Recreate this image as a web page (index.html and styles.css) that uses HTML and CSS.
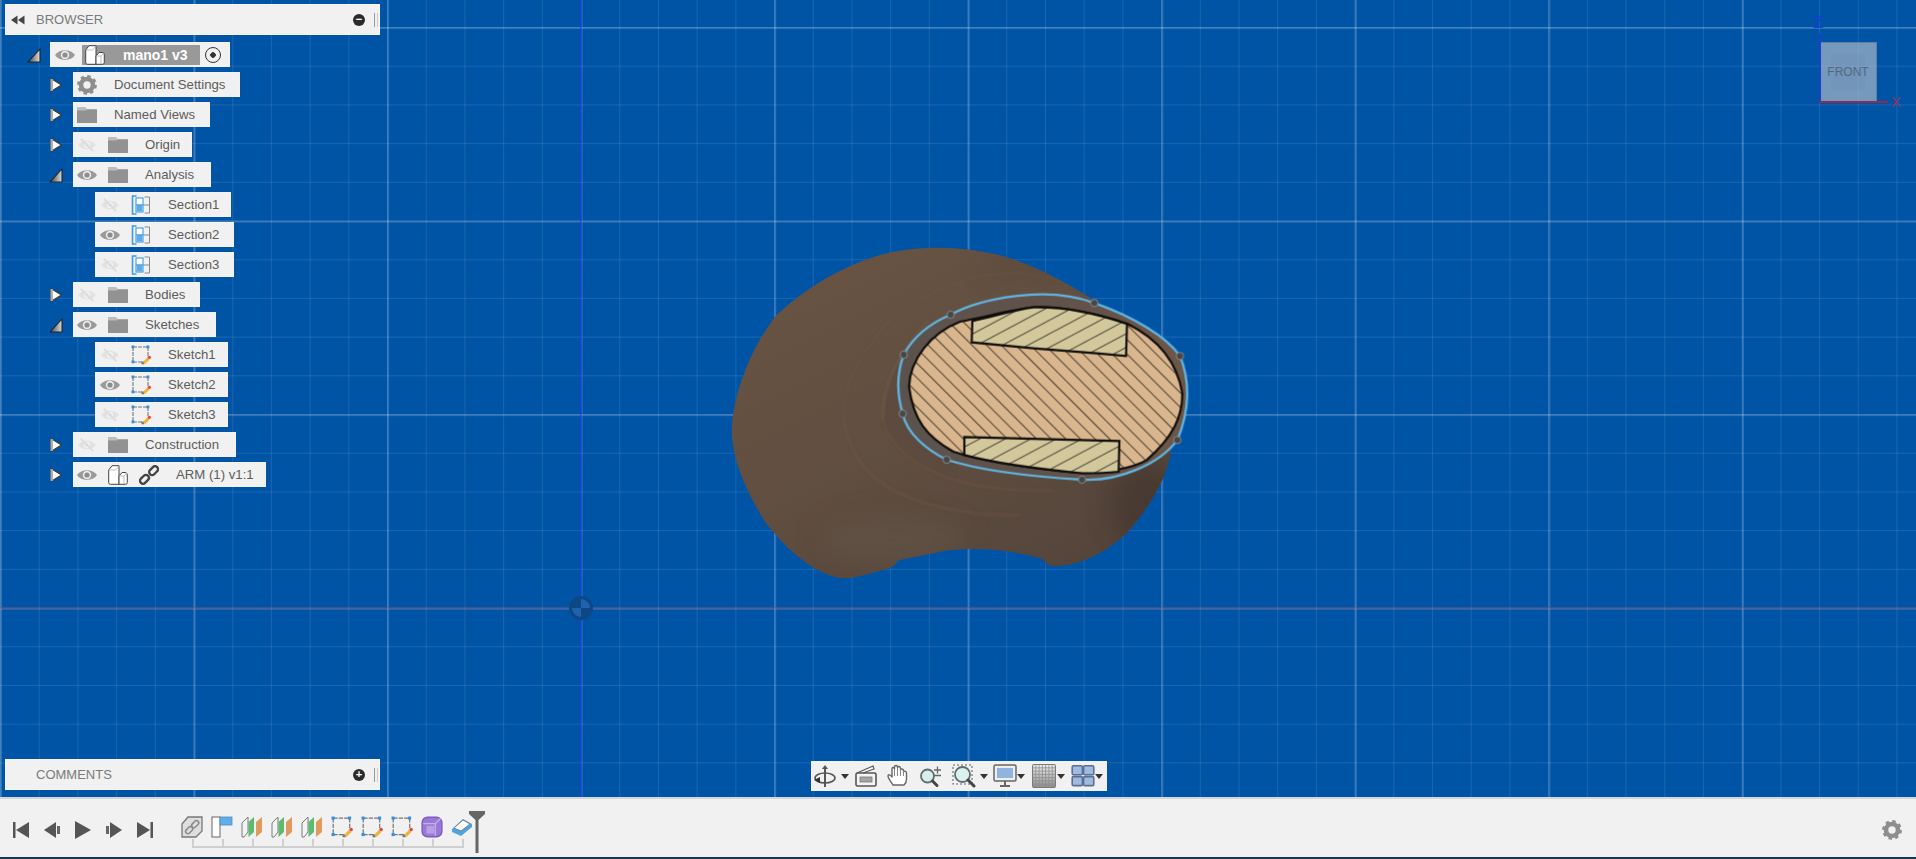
FILE: index.html
```html
<!DOCTYPE html>
<html lang="en">
<head>
<meta charset="utf-8">
<title>mano1 v3</title>
<link rel="stylesheet" href="styles.css">
</head>
<body>
<svg class="defs" aria-hidden="true">
  <defs>
    <linearGradient id="tri" x1="0" y1="0" x2="1" y2="0"><stop offset="0" stop-color="#444"/><stop offset="1" stop-color="#ddd"/></linearGradient>
    <linearGradient id="gridfade" x1="0" y1="0" x2="0" y2="1"><stop offset="0" stop-color="#f0f0f0"/><stop offset="1" stop-color="#8e8e8e"/></linearGradient>
    <symbol id="arrow-r" viewBox="0 0 14 16"><path d="M2 1.5 L12.5 8 L2 14.5Z" fill="#fff" stroke="#3b3b3b" stroke-width="1.3" stroke-linejoin="round"/><rect x="1.5" y="2" width="2.4" height="12" fill="#aaa"/></symbol>
    <symbol id="arrow-d" viewBox="0 0 14 16"><path d="M1 15 L13 2 V15Z" fill="url(#tri)" stroke="#222" stroke-width="1.1" stroke-linejoin="round"/></symbol>
    <symbol id="rewind" viewBox="0 0 14 10"><path d="M0 5 L6.5 0.5 V9.5Z M7 5 L13.5 0.5 V9.5Z" fill="#444"/></symbol>
    <symbol id="eye" viewBox="0 0 20 14"><path d="M0 7 C4 0.5 16 0.5 20 7 C16 13.5 4 13.5 0 7Z" fill="#9a9a9a"/><circle cx="10" cy="7" r="4.2" fill="#ececec"/><circle cx="10" cy="7" r="2.6" fill="#8d8d8d"/></symbol>
    <symbol id="eye-off" viewBox="0 0 20 16"><path d="M0 8 C4 1.5 16 1.5 20 8 C16 14.5 4 14.5 0 8Z" fill="#e2e2e2"/><circle cx="10" cy="8" r="3.6" fill="#f2f2f2"/><circle cx="10" cy="8" r="2" fill="#dedede"/><path d="M3 1 L17 15" stroke="#dcdcdc" stroke-width="2"/></symbol>
    <symbol id="folder" viewBox="0 0 20 17"><path d="M0 1 H8 L10 3 H20 V17 H0Z" fill="#bdbdbd"/><path d="M0 4.5 H8.5 L10 3.5 H20 V17 H0Z" fill="#929292"/></symbol>
    <symbol id="gear" viewBox="0 0 20 20"><circle cx="10" cy="10" r="6" fill="none" stroke="#8e8e8e" stroke-width="4.6"/><circle cx="10" cy="10" r="8.4" fill="none" stroke="#8e8e8e" stroke-width="3" stroke-dasharray="3.3 3.3"/></symbol>
    <symbol id="component" viewBox="0 0 20 20"><path d="M0.7 5 L4 0.7 H11 V19.3 H2.5 Q0.7 19.3 0.7 17.5Z" fill="#fff" stroke="#444" stroke-width="1"/><path d="M0.7 5 H7.5 L11 1" fill="none" stroke="#b0b0b0" stroke-width=".8"/><path d="M11 11 L14 7.5 H17 Q19.3 7.5 19.3 10 V17.5 Q19.3 19.3 17.5 19.3 H11Z" fill="#fff" stroke="#444" stroke-width="1"/><path d="M11 11 H16 L19 8 M16 11 V19" fill="none" stroke="#b0b0b0" stroke-width=".8"/></symbol>
    <symbol id="section" viewBox="0 0 20 20"><path d="M5.5 1 H1.5 V19 H5.5" fill="none" stroke="#3d9be6" stroke-width="1.6"/><rect x="5" y="3" width="7" height="14" fill="#fff" stroke="#3d9be6" stroke-width="1.1"/><rect x="5.6" y="10" width="5.8" height="6.4" fill="#5aabea"/><path d="M5 9.8 H12" stroke="#3d9be6" stroke-width="1"/><path d="M12 10 H18.5 M13.5 2 H18.5 V18 H13.5" fill="none" stroke="#8a8a8a" stroke-width="1"/></symbol>
    <symbol id="sketch" viewBox="0 0 20 20"><path d="M2 2 H17 V11 M2 2 V17 H11" fill="none" stroke="#777" stroke-width="1.1" stroke-dasharray="4 1"/><rect x="0.5" y="0.5" width="2.8" height="2.8" fill="#2f8fe2"/><rect x="15.5" y="0.5" width="2.8" height="2.8" fill="#2f8fe2"/><rect x="0.5" y="15.5" width="2.8" height="2.8" fill="#2f8fe2"/><rect x="10.5" y="16.5" width="2.8" height="2.8" fill="#777"/><path d="M13 18 L17.5 13.5" stroke="#f0b434" stroke-width="3"/><circle cx="18.3" cy="12.3" r="1.6" fill="#ee4040"/></symbol>
    <symbol id="link" viewBox="0 0 22 22"><g fill="none" stroke="#444" stroke-width="2.6"><rect x="10.5" y="3" width="11" height="6.5" rx="3.2" transform="rotate(-45 16 6.2)"/><rect x="0.5" y="12.5" width="11" height="6.5" rx="3.2" transform="rotate(-45 6 15.7)"/></g></symbol>
    <symbol id="tl-link" viewBox="0 0 22 22"><path d="M1 8 L7 1 H21 V15 L15 21 H1Z" fill="#dedede" stroke="#777" stroke-width="1.3"/><g fill="none" stroke="#8a8a8a" stroke-width="1.5"><rect x="10" y="6" width="8" height="4.5" rx="2.2" transform="rotate(-45 14 8)"/><rect x="4" y="12" width="8" height="4.5" rx="2.2" transform="rotate(-45 8 14)"/></g></symbol>
    <symbol id="tl-flag" viewBox="0 0 22 22"><rect x="1" y="1" width="8" height="20" fill="#fff" stroke="#666" stroke-width="1"/><rect x="9" y="1" width="12" height="8" fill="#62aee8" stroke="#4a8fc8" stroke-width=".8"/></symbol>
    <symbol id="tl-plane" viewBox="0 0 22 22"><path d="M1 7 L7 1 V16 L3 21 H1Z" fill="#f3f3f3" stroke="#7a7a7a" stroke-width="1"/><path d="M7.5 6 L13 1 V16 L7.5 21Z" fill="#5bbb6e"/><path d="M15 6 L21 1 V16 L15 21Z" fill="#e09a5c"/></symbol>
    <symbol id="tl-solid" viewBox="0 0 20 20"><rect x="1" y="1" width="18" height="18" rx="5" fill="#9a78d8" stroke="#7a55c0" stroke-width="1.2"/><path d="M2 7 H13 L18 2 M13 7 V18" fill="none" stroke="#c6b2ea" stroke-width="1.2"/><rect x="5" y="9" width="7" height="7" fill="#b8a0e4"/></symbol>
    <symbol id="tl-erase" viewBox="0 0 22 22"><path d="M1 13 L12 3 L21 8 V11 L10 20 L1 16Z" fill="#4ea3e2"/><path d="M3 12 L12 4 L19 8 L10 15Z" fill="#fff" stroke="#777" stroke-width=".9"/></symbol>
    <symbol id="orbit" viewBox="0 0 24 24"><path d="M12 1 L15 5 H13 V23 H11 V5 H9Z" fill="#555"/><ellipse cx="12" cy="14" rx="10" ry="5" fill="none" stroke="#555" stroke-width="1.6"/><path d="M1 16 L7 13 V19Z" fill="#333"/></symbol>
    <symbol id="look" viewBox="0 0 24 24"><path d="M3 9 L19 2 L20 5 L6 10" fill="#fff" stroke="#555" stroke-width="1.2"/><rect x="2" y="9" width="20" height="13" rx="1.5" fill="#f5f5f5" stroke="#555" stroke-width="1.6"/><rect x="6" y="13" width="12" height="5" fill="#a4a4a4" stroke="#777" stroke-width=".8"/></symbol>
    <symbol id="hand" viewBox="0 0 24 24"><path d="M7 21 C5 18 2 14 2 12 C2 10 4 10.5 6 13 V5 C6 3 8.5 3 8.5 5 V3 C8.5 1 11.5 1 11.5 3 V4 C11.5 2 14.5 2 14.5 4.5 V6 C14.5 4.5 17.5 4.5 17.5 6.5 V8 C17.5 6.5 20.5 7 20.5 9 V15 C20.5 18 19 20 18 21Z" fill="#fff" stroke="#666" stroke-width="1.4" stroke-linejoin="round"/><path d="M8.5 5 V12 M11.5 4 V12 M14.5 5 V12 M17.5 7 V12" stroke="#888" stroke-width="1"/></symbol>
    <symbol id="zoomer" viewBox="0 0 24 24"><circle cx="8.5" cy="12" r="6.5" fill="#d6eeee" stroke="#5e6e6e" stroke-width="1.8"/><path d="M13.5 17 L18 21.5" stroke="#444" stroke-width="3" stroke-linecap="round"/><path d="M15 6 H22 M18.5 2.5 V9.5 M15 11.5 H22" stroke="#666" stroke-width="1.3"/></symbol>
    <symbol id="fit" viewBox="0 0 24 24"><rect x="1" y="1" width="19" height="19" fill="none" stroke="#666" stroke-width="1.1" stroke-dasharray="2 2"/><circle cx="10.5" cy="10.5" r="7.5" fill="#dcf0f0" stroke="#5e6e6e" stroke-width="1.8"/><path d="M16 16 L22 22" stroke="#444" stroke-width="3" stroke-linecap="round"/></symbol>
    <symbol id="display" viewBox="0 0 24 24"><rect x="1" y="1" width="22" height="16" rx="1.5" fill="#eee" stroke="#666" stroke-width="1.5"/><rect x="4" y="4" width="16" height="10" fill="#8fb4de"/><path d="M7 22 H17 M12 17 V22" stroke="#666" stroke-width="2"/></symbol>
    <symbol id="gridi" viewBox="0 0 22 22"><rect x=".5" y=".5" width="21" height="21" rx="1.5" fill="url(#gridfade)" stroke="#777"/><path d="M3.5 0 V22 M6.5 0 V22 M9.5 0 V22 M12.5 0 V22 M15.5 0 V22 M18.5 0 V22 M0 3.5 H22 M0 6.5 H22 M0 9.5 H22 M0 12.5 H22 M0 15.5 H22 M0 18.5 H22" stroke="#8a8a8a" stroke-width=".7"/></symbol>
    <symbol id="views" viewBox="0 0 20 20"><rect x="1" y="1.5" width="8.5" height="7.5" rx="1" fill="#9fbbe0" stroke="#5a6f92" stroke-width="1.3"/><rect x="10.5" y="1.5" width="8.5" height="7.5" rx="1" fill="#9fbbe0" stroke="#5a6f92" stroke-width="1.3"/><rect x="1" y="10.5" width="8.5" height="7.5" rx="1" fill="#9fbbe0" stroke="#5a6f92" stroke-width="1.3"/><rect x="10.5" y="10.5" width="8.5" height="7.5" rx="1" fill="#9fbbe0" stroke="#5a6f92" stroke-width="1.3"/></symbol>
  </defs>
</svg>

<div class="app">
  <main class="viewport">
    <svg class="model" viewBox="0 0 1560 1110" aria-label="Section view of the model">
      <defs>
        <linearGradient id="bodyfill" x1="0.1" y1="0" x2="0.8" y2="1">
          <stop offset="0" stop-color="#6b5544"/><stop offset=".55" stop-color="#604e40"/><stop offset="1" stop-color="#52433a"/>
        </linearGradient>
        <linearGradient id="bandfill" x1="0" y1="0" x2="1" y2="0">
          <stop offset="0" stop-color="#5c524d"/><stop offset=".6" stop-color="#62524a"/><stop offset="1" stop-color="#6d5747"/>
        </linearGradient>
        <filter id="soft" x="-30%" y="-30%" width="160%" height="160%"><feGaussianBlur stdDeviation="40"/></filter>
        <filter id="ridge" x="-10%" y="-10%" width="120%" height="120%"><feGaussianBlur stdDeviation="2.5"/></filter>
        <clipPath id="bodyclip"><path d="M700 83 C790 82 880 95 960 125 C1040 155 1120 200 1180 240 C1300 310 1420 500 1415 680 C1405 770 1350 860 1280 940 C1210 1005 1130 1040 1060 1038 C1040 1036 1035 1025 1030 1018 C950 990 800 975 700 1000 C660 1008 620 1016 592 1022 C588 1035 575 1045 545 1050 C500 1065 460 1075 425 1075 C340 1060 260 990 195 905 C135 810 95 710 95 630 C100 520 150 390 225 290 C320 200 440 130 560 100 C610 88 655 84 700 83Z"/></clipPath>
        <pattern id="hatch-main" width="31" height="31" patternUnits="userSpaceOnUse" patternTransform="rotate(-45)">
          <rect width="31" height="31" fill="#d9b68d"/><rect width="2.3" height="31" fill="#1d1a16"/>
        </pattern>
        <pattern id="hatch-ins" width="36" height="36" patternUnits="userSpaceOnUse" patternTransform="rotate(62)">
          <rect width="36" height="36" fill="#d3c89c"/><rect width="2.3" height="36" fill="#1d1a16"/>
        </pattern>
      </defs>
      <g clip-path="url(#bodyclip)">
        <rect width="1560" height="1110" fill="url(#bodyfill)"/>
        <g filter="url(#soft)" opacity=".7">
          <ellipse cx="1340" cy="850" rx="110" ry="130" fill="#43362f"/>
          <ellipse cx="580" cy="960" rx="220" ry="70" fill="#625246"/>
          <ellipse cx="1000" cy="130" rx="150" ry="40" fill="#5a483b"/>
        </g>
        <path fill="#5d4c3f" opacity=".7" filter="url(#ridge)" d="M548 600 C545 500 590 400 690 300 L800 600 L760 780 C640 740 570 680 548 600Z"/>
        <g filter="url(#ridge)" fill="none">
          <path d="M432 600 C425 500 470 420 560 310 C640 240 760 175 900 160 C1000 155 1100 180 1180 235" stroke="#75594a" stroke-width="5" opacity=".35"/>
          <path d="M432 600 C445 700 500 780 620 830 C720 870 850 890 960 885" stroke="#72594a" stroke-width="8" opacity=".4"/>
          <path d="M548 600 C545 500 590 400 690 300" stroke="#77614e" stroke-width="7" opacity=".6"/>
          <path d="M548 600 C570 680 640 740 760 780 C850 805 960 815 1060 812" stroke="#75594a" stroke-width="6" opacity=".45"/>
        </g>
      </g>
      <path fill="url(#bandfill)" d="M752 284 C840 235 1040 195 1183 249 C1300 290 1400 350 1440 408 C1470 480 1470 570 1432 660 C1380 730 1260 785 1146 779 C1000 770 850 755 740 719 C680 690 620 640 608 581 C590 520 590 460 611 404 C640 350 690 310 752 284Z"/>
      <path fill="url(#hatch-main)" stroke="#0f0d0b" stroke-width="6.5" d="M1000 262 C1060 258 1180 275 1283 312 C1370 355 1430 420 1447 520 C1447 590 1420 650 1340 720 C1300 745 1200 762 1130 758 C1000 745 850 725 760 695 C680 650 640 600 627 500 C630 420 690 340 780 305 C860 290 930 270 1000 262Z"/>
      <path fill="url(#hatch-ins)" stroke="#0f0d0b" stroke-width="6.5" d="M817 303 C880 290 940 270 1000 262 C1090 260 1190 280 1281 312 L1278 408 L1190 400 L1000 385 L815 367Z"/>
      <path fill="url(#hatch-ins)" stroke="#0f0d0b" stroke-width="6.5" d="M793 651 L1258 663 L1256 755 C1200 760 1150 760 1130 758 C1000 745 880 728 793 705Z"/>
      <path fill="none" stroke="#62b5e2" stroke-width="7" d="M752 284 C840 235 1040 195 1183 249 C1300 290 1400 350 1440 408 C1470 480 1470 570 1432 660 C1380 730 1260 785 1146 779 C1000 770 850 755 740 719 C680 690 620 640 608 581 C590 520 590 460 611 404 C640 350 690 310 752 284Z"/>
      <g class="node"><circle cx="1183" cy="249" r="11"/><circle cx="1440" cy="408" r="11"/><circle cx="1432" cy="660" r="11"/><circle cx="1146" cy="779" r="11"/><circle cx="740" cy="719" r="11"/><circle cx="608" cy="581" r="11"/><circle cx="611" cy="404" r="11"/><circle cx="752" cy="284" r="11"/></g>
    </svg>

    <svg class="origin" viewBox="0 0 26 26" aria-hidden="true">
      <circle cx="13" cy="13" r="12" fill="#0d4884"/>
      <path d="M13 13 V4 A9 9 0 0 1 22 13Z M13 13 V22 A9 9 0 0 1 4 13Z" fill="#1f63ad"/>
    </svg>

    <div class="cube">
      <span class="axis-z-label">Z</span>
      <div class="cube-face"><div class="cube-inner">FRONT</div></div>
      <span class="axis-x-label">X</span>
    </div>

    <aside class="browser">
      <header class="panel-bar">
        <svg class="back"><use href="#rewind"/></svg>
        <span class="panel-title">BROWSER</span>
        <span class="round-btn">−</span>
        <span class="grip"></span>
      </header>
      <ul class="tree">
        <li class="row root">
          <svg class="tw"><use href="#arrow-d"/></svg>
          <div class="item">
            <svg class="ic-eye"><use href="#eye"/></svg>
            <div class="active"><svg class="ic"><use href="#component"/></svg><span>mano1 v3</span></div>
            <span class="target"></span>
          </div>
        </li>
        <li class="row l1"><svg class="tw"><use href="#arrow-r"/></svg><div class="item"><svg class="ic"><use href="#gear"/></svg><span class="lbl">Document Settings</span></div></li>
        <li class="row l1"><svg class="tw"><use href="#arrow-r"/></svg><div class="item"><svg class="ic-f"><use href="#folder"/></svg><span class="lbl">Named Views</span></div></li>
        <li class="row l1"><svg class="tw"><use href="#arrow-r"/></svg><div class="item snug"><svg class="ic-eye"><use href="#eye-off"/></svg><svg class="ic-f"><use href="#folder"/></svg><span class="lbl">Origin</span></div></li>
        <li class="row l1"><svg class="tw"><use href="#arrow-d"/></svg><div class="item roomy"><svg class="ic-eye"><use href="#eye"/></svg><svg class="ic-f"><use href="#folder"/></svg><span class="lbl">Analysis</span></div></li>
        <li class="row l2"><div class="item snug"><svg class="ic-eye"><use href="#eye-off"/></svg><svg class="ic"><use href="#section"/></svg><span class="lbl">Section1</span></div></li>
        <li class="row l2"><div class="item"><svg class="ic-eye"><use href="#eye"/></svg><svg class="ic"><use href="#section"/></svg><span class="lbl">Section2</span></div></li>
        <li class="row l2"><div class="item"><svg class="ic-eye"><use href="#eye-off"/></svg><svg class="ic"><use href="#section"/></svg><span class="lbl">Section3</span></div></li>
        <li class="row l1"><svg class="tw"><use href="#arrow-r"/></svg><div class="item"><svg class="ic-eye"><use href="#eye-off"/></svg><svg class="ic-f"><use href="#folder"/></svg><span class="lbl">Bodies</span></div></li>
        <li class="row l1"><svg class="tw"><use href="#arrow-d"/></svg><div class="item roomy"><svg class="ic-eye"><use href="#eye"/></svg><svg class="ic-f"><use href="#folder"/></svg><span class="lbl">Sketches</span></div></li>
        <li class="row l2"><div class="item snug"><svg class="ic-eye"><use href="#eye-off"/></svg><svg class="ic"><use href="#sketch"/></svg><span class="lbl">Sketch1</span></div></li>
        <li class="row l2"><div class="item snug"><svg class="ic-eye"><use href="#eye"/></svg><svg class="ic"><use href="#sketch"/></svg><span class="lbl">Sketch2</span></div></li>
        <li class="row l2"><div class="item snug"><svg class="ic-eye"><use href="#eye-off"/></svg><svg class="ic"><use href="#sketch"/></svg><span class="lbl">Sketch3</span></div></li>
        <li class="row l1"><svg class="tw"><use href="#arrow-r"/></svg><div class="item roomy"><svg class="ic-eye"><use href="#eye-off"/></svg><svg class="ic-f"><use href="#folder"/></svg><span class="lbl">Construction</span></div></li>
        <li class="row l1"><svg class="tw"><use href="#arrow-r"/></svg><div class="item snug"><svg class="ic-eye"><use href="#eye"/></svg><svg class="ic"><use href="#component"/></svg><svg class="ic"><use href="#link"/></svg><span class="lbl">ARM (1) v1:1</span></div></li>
      </ul>
    </aside>

    <section class="comments panel-bar">
      <span class="back"></span>
      <span class="panel-title">COMMENTS</span>
      <span class="round-btn">+</span>
      <span class="grip"></span>
    </section>

    <nav class="navbar">
      <svg class="nv"><use href="#orbit"/></svg><span class="caret"></span>
      <svg class="nv m5"><use href="#look"/></svg>
      <svg class="nv m8"><use href="#hand"/></svg>
      <svg class="nv m9"><use href="#zoomer"/></svg>
      <svg class="nv m9"><use href="#fit"/></svg><span class="caret"></span>
      <svg class="nv m5"><use href="#display"/></svg><span class="caret tight"></span>
      <svg class="nv m7"><use href="#gridi"/></svg><span class="caret m1"></span>
      <svg class="nv m6"><use href="#views"/></svg><span class="caret tight"></span>
    </nav>
  </main>

  <footer class="timeline">
    <div class="controls">
      <svg class="ctl" viewBox="0 0 16 18"><rect x="0" y="1" width="2.5" height="16" fill="#555"/><path d="M16 1 V17 L3 9Z" fill="#555"/></svg>
      <svg class="ctl" viewBox="0 0 16 18"><path d="M12 1 V17 L0 9Z" fill="#555"/><rect x="13" y="5" width="3" height="8" fill="#666"/></svg>
      <svg class="ctl" viewBox="0 0 16 18"><path d="M0 0 V18 L16 9Z" fill="#555"/></svg>
      <svg class="ctl" viewBox="0 0 16 18"><rect x="0" y="5" width="3" height="8" fill="#666"/><path d="M4 1 V17 L16 9Z" fill="#555"/></svg>
      <svg class="ctl" viewBox="0 0 16 18"><path d="M0 1 V17 L13 9Z" fill="#555"/><rect x="13.5" y="1" width="2.5" height="16" fill="#555"/></svg>
    </div>
    <div class="track">
      <div class="steps">
        <svg class="step"><use href="#tl-link"/></svg>
        <svg class="step"><use href="#tl-flag"/></svg>
        <svg class="step"><use href="#tl-plane"/></svg>
        <svg class="step"><use href="#tl-plane"/></svg>
        <svg class="step"><use href="#tl-plane"/></svg>
        <svg class="step"><use href="#sketch"/></svg>
        <svg class="step"><use href="#sketch"/></svg>
        <svg class="step"><use href="#sketch"/></svg>
        <svg class="step"><use href="#tl-solid"/></svg>
        <svg class="step"><use href="#tl-erase"/></svg>
      </div>
      <div class="ruler"></div>
      <svg class="marker" viewBox="0 0 16 42"><path d="M0 0 H16 V3 L9.5 9 V42 H6.5 V9 L0 3Z" fill="#666"/></svg>
    </div>
    <svg class="settings"><use href="#gear"/></svg>
  </footer>
</div>
</body>
</html>
```
FILE: styles.css
```css
* { box-sizing: border-box; }
html, body { margin: 0; height: 100%; overflow: hidden; background: #f1f1f1; }
body { font-family: "Liberation Sans", Arial, sans-serif; color: #5c5c5c; }
.defs { position: absolute; width: 0; height: 0; }
.app { height: 859px; display: flex; flex-direction: column; border-bottom: 2px solid #17384f; filter: blur(.45px); }

.viewport {
  position: relative; height: 797px; overflow: hidden; background-color: #0054a6;
  background-image:
    linear-gradient(90deg, rgba(12,50,225,.6) 0 2px, transparent 2px),
    linear-gradient(rgba(130,45,100,.4) 0 2px, transparent 2px),
    linear-gradient(90deg, rgba(255,255,255,.18) 0 1.5px, transparent 1.5px),
    linear-gradient(rgba(255,255,255,.18) 0 1.5px, transparent 1.5px),
    linear-gradient(90deg, rgba(255,255,255,.1) 0 1px, transparent 1px),
    linear-gradient(rgba(255,255,255,.1) 0 1px, transparent 1px);
  background-size: 2px 100%, 100% 2px, 193.56px 100%, 100% 193.56px, 38.71px 100%, 100% 38.71px;
  background-position: 580px 0, 0 607px, 0 0, 0 27px, 0 0, 0 27px;
  background-repeat: no-repeat, no-repeat, repeat, repeat, repeat, repeat;
}

/* free canvas items */
.model { position: absolute; left: 700px; top: 220px; width: 520px; height: 370px; }
.node circle { fill: #45474b; stroke: #8b8b8b; stroke-width: 3; }
.origin { position: absolute; left: 568px; top: 595px; width: 26px; height: 26px; }

.cube { position: absolute; left: 1819px; top: 16px; width: 90px; height: 95px; }
.axis-z-label { position: absolute; left: -6px; top: -3px; font: 17px "Liberation Sans", sans-serif; color: #1040d8; }
.axis-x-label { position: absolute; left: 72px; top: 77px; font: 15px "Liberation Sans", sans-serif; color: #8f3560; }
.cube-face {
  position: absolute; left: 0; top: 26px; width: 58px; height: 60px; padding: 11px;
  background: rgba(195,200,205,.6); border: 1px solid #63809f;
}
.cube-face::before { content: ""; position: absolute; left: -1px; top: -10px; width: 2px; height: 70px; background: #1b3fd0; }
.cube-face::after { content: ""; position: absolute; left: -1px; bottom: -2px; width: 69px; height: 2px; background: #8f2a50; }
.cube-inner {
  width: 100%; height: 100%; display: flex; align-items: center; justify-content: center;
  font-size: 12px; color: #52697f; background: rgba(110,140,180,.25); white-space: nowrap;
}

/* panels */
.browser { position: absolute; left: 5px; top: 4px; width: 375px; }
.panel-bar {
  display: flex; align-items: center; height: 31px; background: #f1f1f1;
  border: 1px solid rgba(255,255,255,.35); font-size: 13px; color: #7a7a7a;
}
.back { width: 14px; height: 10px; margin: 0 11px 0 5px; flex: none; }
.panel-title { flex: 1; }
.round-btn {
  width: 12px; height: 12px; border-radius: 50%; background: #2b2b2b; color: #fff;
  display: flex; align-items: center; justify-content: center; font: bold 11px/1 "Liberation Sans", sans-serif;
}
.grip { width: 4px; height: 14px; margin: 0 1px 0 9px; border-left: 1px solid #999; border-right: 1px solid #ccc; }
.comments { position: absolute; left: 5px; top: 759px; width: 375px; }

.tree { list-style: none; margin: 7px 0 0; padding: 0; display: flex; flex-direction: column; gap: 5px; }
.row { display: flex; align-items: center; height: 25px; }
.root { margin-left: 22px; }
.l1 { margin-left: 44px; }
.l2 { margin-left: 90px; }
.tw { width: 14px; height: 16px; flex: none; }
.root .tw { margin-right: 9px; }
.l1 .tw { margin-right: 10px; }
.item {
  display: flex; align-items: center; gap: 5px; height: 25px; padding-right: 14px;
  background: #f1f1f1; font-size: 13.2px; color: #5c5c5c; white-space: nowrap;
  border: 1px solid rgba(255,255,255,.2);
}
.item.snug { padding-right: 11px; }
.item.roomy { padding-right: 16px; }
.l2 .item, .root .item { padding-left: 1px; }
.ic-eye, .ic, .ic-f { flex: none; margin: 0 3px; }
.ic-eye { width: 20px; height: 14px; }
.ic { width: 20px; height: 20px; }
.ic-f { width: 20px; height: 17px; }
.lbl { margin-left: 9px; }
.root .item { padding-right: 0; gap: 3px; width: 180px; }
.active {
  display: flex; align-items: center; width: 118px; height: 20px; background: #999;
  color: #fff; font-weight: bold; font-size: 14px; gap: 18px; margin-left: 1px;
}
.active .ic { margin: 0 0 0 3px; }
.target { width: 16px; height: 16px; margin-left: 2px; border-radius: 50%; border: 1.5px solid #333; background: radial-gradient(circle, #333 0 2.5px, #f1f1f1 3px); }

/* navigation bar */
.navbar {
  position: absolute; left: 811px; top: 761px; width: 296px; height: 30px; padding-left: 2px;
  display: flex; align-items: center; background: #f1f1f1;
}
.nv { width: 24px; height: 24px; flex: none; }
.m5 { margin-left: 5px; }
.m6 { margin-left: 6px; }
.m7 { margin-left: 7px; }
.m8 { margin-left: 8px; }
.m9 { margin-left: 9px; }
.caret { width: 0; height: 0; margin-left: 4px; border: 4px solid transparent; border-top: 5px solid #333; border-bottom: 0; flex: none; }
.caret.tight { margin-left: 0; }
.caret.m1 { margin-left: 1px; }

/* timeline */
.timeline {
  flex: 1; display: flex; align-items: flex-start; padding: 12px 14px 0 13px;
  background: #f1f1f1; border-top: 2px solid #d6d6d6;
}
.controls { display: flex; gap: 15px; margin-top: 10px; }
.ctl { width: 16px; height: 18px; }
.track { position: relative; display: flex; flex-direction: column; margin-left: 28px; }
.steps { display: flex; gap: 8px; margin-top: 5px; }
.step { width: 22px; height: 22px; flex: none; }
.ruler {
  width: 272px; height: 9px; margin: 1px 0 0 11px;
  border-bottom: 2px solid #cfcfcf;
  background: repeating-linear-gradient(90deg, #cfcfcf 0 2px, transparent 2px 30px);
}
.marker { position: absolute; left: 288px; top: 0; width: 16px; height: 42px; }
.settings { width: 20px; height: 20px; margin: 9px 0 0 auto; }
```
